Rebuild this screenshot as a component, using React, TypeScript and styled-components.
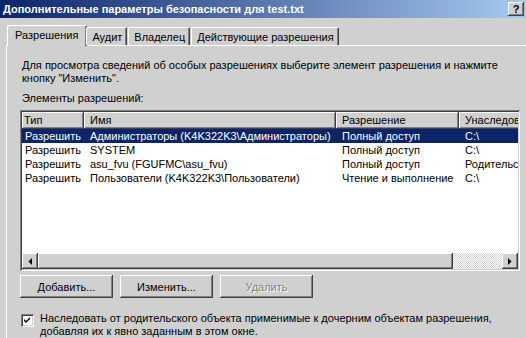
import React from "react";
import styled, { createGlobalStyle, css } from "styled-components";

const FACE = "#d0d0d0";
const SHADOW = "#808080";
const DARK = "#404040";
const NAVY = "#0a246a";
const FONT = `"Liberation Sans", Arial, sans-serif`;

const GlobalStyle = createGlobalStyle`
  html, body {
    margin: 0;
    padding: 0;
    width: 526px;
    height: 338px;
    overflow: hidden;
    background: ${FACE};
  }
  #root { width: 526px; height: 338px; }
  * { box-sizing: border-box; }
`;

const raised = css`
  box-shadow: inset -1px -1px ${DARK}, inset 1px 1px #ffffff,
    inset -2px -2px ${SHADOW}, inset 2px 2px ${FACE};
`;

const Window = styled.div`
  width: 526px;
  height: 338px;
  display: flex;
  flex-direction: column;
  background: ${FACE};
  font-family: ${FONT};
  font-size: 11px;
  color: #000;
  overflow: hidden;
`;

const TitleBar = styled.div`
  height: 18px;
  flex: none;
  display: flex;
  align-items: center;
  justify-content: space-between;
  padding: 0 2px 0 3px;
  background: linear-gradient(to right, ${NAVY}, #a6caf0);
`;

const TitleText = styled.span`
  color: #fff;
  font-weight: bold;
  font-size: 11px;
  white-space: nowrap;
`;

const HelpButton = styled.div`
  width: 16px;
  height: 14px;
  background: ${FACE};
  ${raised};
  display: flex;
  align-items: center;
  justify-content: center;
  font-weight: bold;
  font-size: 11px;
  line-height: 14px;
`;

const Body = styled.div`
  flex: 1;
  display: flex;
  flex-direction: column;
  padding: 6px 0 0 6px;
  min-height: 0;
`;

const TabStrip = styled.div`
  height: 21px;
  flex: none;
  display: flex;
  align-items: flex-end;
  padding-left: 3px;
  position: relative;
  z-index: 1;
`;

const Tab = styled.div<{ $active?: boolean }>`
  height: 18px;
  padding: 0 4px 0 5px;
  display: flex;
  align-items: center;
  white-space: nowrap;
  background: ${FACE};
  border-top: 1px solid #fff;
  border-left: 1px solid #fff;
  border-right: 1px solid ${DARK};
  border-top-left-radius: 2px;
  border-top-right-radius: 2px;
  box-shadow: inset -1px 0 ${SHADOW};
  margin-right: 1px;
  ${(p) =>
    p.$active &&
    css`
      height: 21px;
      margin-bottom: -1px;
      margin-left: -2px;
      margin-right: -1px;
      padding: 0 8px 2px 7px;
    `}
`;

const TabPanel = styled.div`
  flex: 1;
  border-top: 1px solid #fff;
  border-left: 1px solid #fff;
  padding: 13px 0 0 13px;
  display: flex;
  flex-direction: column;
  min-height: 0;
`;

const Description = styled.div`
  line-height: 13px;
  margin-left: 2px;
  white-space: nowrap;
`;

const Label = styled.div`
  line-height: 13px;
  margin: 7px 0 0 2px;
`;

const ListView = styled.div`
  margin-top: 5px;
  width: 500px;
  height: 161px;
  flex: none;
  background: #fff;
  padding: 2px;
  box-shadow: inset 1px 1px ${SHADOW}, inset -1px -1px #fff,
    inset 2px 2px ${DARK}, inset -2px -2px ${FACE};
  display: flex;
  flex-direction: column;
`;

const ListClip = styled.div`
  flex: 1;
  overflow: hidden;
  min-height: 0;
`;

const HeaderRow = styled.div`
  display: flex;
  height: 17px;
  width: 567px;
`;

const HeaderCell = styled.div<{ $w: number; $first?: boolean }>`
  flex: none;
  width: ${(p) => p.$w}px;
  background: ${FACE};
  box-shadow: inset -1px -1px ${DARK}, inset 1px 1px #fff,
    inset -2px -2px ${SHADOW};
  padding-left: ${(p) => (p.$first ? 2 : 6)}px;
  line-height: 17px;
  white-space: nowrap;
  overflow: hidden;
`;

const Row = styled.div<{ $selected?: boolean }>`
  display: flex;
  height: 14px;
  width: 567px;
  background: ${(p) => (p.$selected ? NAVY : "transparent")};
  color: ${(p) => (p.$selected ? "#fff" : "#000")};
`;

const Cell = styled.div<{ $w: number; $first?: boolean }>`
  flex: none;
  width: ${(p) => p.$w}px;
  padding-left: ${(p) => (p.$first ? 3 : 6)}px;
  line-height: 14px;
  white-space: nowrap;
  overflow: hidden;
`;

const ScrollBar = styled.div`
  height: 16px;
  flex: none;
  display: flex;
`;

const ScrollButton = styled.div`
  width: 16px;
  height: 16px;
  flex: none;
  background: ${FACE};
  ${raised};
  display: flex;
  align-items: center;
  justify-content: center;
`;

const Thumb = styled.div`
  width: 415px;
  height: 16px;
  flex: none;
  background: ${FACE};
  ${raised};
`;

const Track = styled.div`
  flex: 1;
  height: 16px;
  background: repeating-conic-gradient(#ffffff 0 25%, ${FACE} 0 50%) 0 0 / 2px 2px;
`;

const ButtonRow = styled.div`
  display: flex;
  gap: 7px;
  margin-top: 4px;
`;

const Button = styled.div<{ $disabled?: boolean }>`
  width: 93px;
  height: 23px;
  background: ${FACE};
  ${raised};
  display: flex;
  align-items: center;
  justify-content: center;
  white-space: nowrap;
  color: ${(p) => (p.$disabled ? SHADOW : "#000")};
  text-shadow: ${(p) => (p.$disabled ? "1px 1px #fff" : "none")};
`;

const CheckRow = styled.div`
  display: flex;
  align-items: flex-start;
  margin-top: 14px;
  padding-left: 1px;
`;

const CheckBox = styled.div`
  width: 13px;
  height: 13px;
  flex: none;
  margin-top: 2px;
  background: #fff;
  box-shadow: inset 1px 1px ${SHADOW}, inset -1px -1px #fff,
    inset 2px 2px ${DARK}, inset -2px -2px ${FACE};
  display: flex;
  align-items: center;
  justify-content: center;
`;

const CheckText = styled.div`
  margin-left: 6px;
  line-height: 13px;
  white-space: nowrap;
`;

const COLS = [62, 252, 123, 130];

const rows = [
  ["Разрешить", "Администраторы (K4K322K3\\Администраторы)", "Полный доступ", "C:\\"],
  ["Разрешить", "SYSTEM", "Полный доступ", "C:\\"],
  ["Разрешить", "asu_fvu (FGUFMC\\asu_fvu)", "Полный доступ", "Родительский объект"],
  ["Разрешить", "Пользователи (K4K322K3\\Пользователи)", "Чтение и выполнение", "C:\\"],
];

const Arrow = ({ dir }: { dir: "left" | "right" }) => (
  <svg width="4" height="7" viewBox="0 0 4 7">
    {dir === "left" ? (
      <polygon points="4,0 4,7 0.5,3.5" fill="#000" />
    ) : (
      <polygon points="0,0 0,7 3.5,3.5" fill="#000" />
    )}
  </svg>
);

export default function App() {
  return (
    <>
      <GlobalStyle />
      <Window>
        <TitleBar>
          <TitleText>Дополнительные параметры безопасности для test.txt</TitleText>
          <HelpButton>?</HelpButton>
        </TitleBar>
        <Body>
          <TabStrip>
            <Tab $active>Разрешения</Tab>
            <Tab>Аудит</Tab>
            <Tab>Владелец</Tab>
            <Tab>Действующие разрешения</Tab>
          </TabStrip>
          <TabPanel>
            <Description>
              Для просмотра сведений об особых разрешениях выберите элемент разрешения и нажмите
              <br />
              кнопку "Изменить".
            </Description>
            <Label>Элементы разрешений:</Label>
            <ListView>
              <ListClip>
                <HeaderRow>
                  <HeaderCell $w={COLS[0]} $first>Тип</HeaderCell>
                  <HeaderCell $w={COLS[1]}>Имя</HeaderCell>
                  <HeaderCell $w={COLS[2]}>Разрешение</HeaderCell>
                  <HeaderCell $w={COLS[3]}>Унаследовано от</HeaderCell>
                </HeaderRow>
                {rows.map((r, i) => (
                  <Row key={i} $selected={i === 0}>
                    {r.map((c, j) => (
                      <Cell key={j} $w={COLS[j]} $first={j === 0}>
                        {c}
                      </Cell>
                    ))}
                  </Row>
                ))}
              </ListClip>
              <ScrollBar>
                <ScrollButton>
                  <Arrow dir="left" />
                </ScrollButton>
                <Thumb />
                <Track />
                <ScrollButton>
                  <Arrow dir="right" />
                </ScrollButton>
              </ScrollBar>
            </ListView>
            <ButtonRow>
              <Button>Добавить...</Button>
              <Button>Изменить...</Button>
              <Button $disabled>Удалить</Button>
            </ButtonRow>
            <CheckRow>
              <CheckBox>
                <svg width="7" height="7" viewBox="0 0 7 7">
                  <path d="M0 2 L2 4 L6 0 L6 2 L2 6 L0 4 Z" fill="#000" />
                </svg>
              </CheckBox>
              <CheckText>
                Наследовать от родительского объекта применимые к дочерним объектам разрешения,
                <br />
                добавляя их к явно заданным в этом окне.
              </CheckText>
            </CheckRow>
          </TabPanel>
        </Body>
      </Window>
    </>
  );
}
